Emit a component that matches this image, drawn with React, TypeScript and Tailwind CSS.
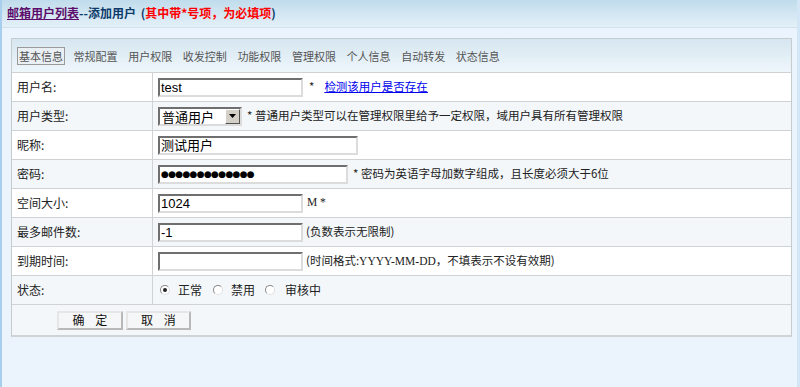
import React from 'react';

const cjk = "font-['Noto_Sans_CJK_SC',sans-serif]";

const tabs = ['基本信息', '常规配置', '用户权限', '收发控制', '功能权限', '管理权限', '个人信息', '自动转发', '状态信息'];

function TextBox({ value, width }: { value: string; width: string }) {
  return (
    <div
      className={`${width} h-[19px] border-2 border-t-[#6f6f6f] border-l-[#6f6f6f] border-b-[#dcdcdc] border-r-[#dcdcdc] bg-white pl-[1px] text-[13px] leading-[15px] text-black font-['Liberation_Sans','Noto_Sans_CJK_SC',sans-serif]`}
    >
      {value}
    </div>
  );
}

function Radio({ checked }: { checked?: boolean }) {
  return (
    <span className="flex h-[10px] w-[10px] items-center justify-center rounded-full border border-t-[#8a8a8a] border-l-[#8a8a8a] border-b-[#e0e0e0] border-r-[#e0e0e0] bg-white">
      {checked && <span className="h-[4px] w-[4px] rounded-full bg-[#222]" />}
    </span>
  );
}

function Row({ label, shade, children }: { label: string; shade?: boolean; children: React.ReactNode }) {
  return (
    <div className={`flex h-[29px] border-b border-[#d0d3d5] ${shade ? 'bg-[#f3f7fa]' : 'bg-white'}`}>
      <div className="flex w-[141px] items-center border-r border-[#d0d3d5] pl-[5px] text-[#222]">{label}</div>
      <div className="flex flex-1 items-center pl-[5px] text-[11.5px] text-[#222]">{children}</div>
    </div>
  );
}

export default function App() {
  return (
    <div className={`h-[387px] w-[800px] overflow-hidden border-l-2 border-l-[#a9cfee] border-r-[3px] border-r-[#d2e6f6] bg-[#ebf4fc] text-[12px] ${cjk}`}>
      {/* Header */}
      <div className="h-[28px] border-b border-[#cfe2ee] bg-gradient-to-b from-[#c0dcec] to-[#e4f0f8] pl-[5px] pt-[5px] font-bold leading-[16px]">
        <span className="text-[#5c0d6b] underline">邮箱用户列表</span>
        <span className="text-[#0c3b6b]">--添加用户 </span>
        <span className="ml-[2px] text-[#0c3b6b]">(</span>
        <span className="text-[#ff0000]">其中带*号项，为必填项</span>
        <span className="text-[#0c3b6b]">)</span>
      </div>

      {/* Panel */}
      <div className="ml-[9px] mt-[10px] w-[781px] border border-[#c6cbce] border-b-2 border-b-[#cfd3d6]">
        <div className="flex h-[34px] items-center gap-[6.6px] border-b border-[#d0d3d5] bg-gradient-to-b from-[#d6e6f0] to-[#eef6fb] pl-[5px] text-[11px] text-[#555]">
          {tabs.map((t, i) => (
            <span
              key={t}
              className={`h-[18px] px-[1px] leading-[16px] ${i === 0 ? 'border border-[#9a9a9a] bg-[#e9eff3]' : 'border border-transparent'}`}
            >
              {t}
            </span>
          ))}
        </div>

        <Row label="用户名:">
          <TextBox value="test" width="w-[145px]" />
          <span className="ml-[6px]">*</span>
          <a className="ml-[10px] text-[#0000ee] underline">检测该用户是否存在</a>
        </Row>
        <Row label="用户类型:" shade>
          <div className="flex h-[19px] w-[84px] border-2 border-t-[#6f6f6f] border-l-[#6f6f6f] border-b-[#dcdcdc] border-r-[#dcdcdc] bg-white">
            <span className="flex-1 pl-[2px] text-[13px] leading-[15px] text-black">普通用户</span>
            <span className="flex w-[15px] items-center justify-center border border-t-white border-l-white border-b-[#555] border-r-[#555] bg-[#d4d0c8]">
              <svg width="7" height="4" viewBox="0 0 7 4">
                <path d="M0 0h7L3.5 4z" fill="#000" />
              </svg>
            </span>
          </div>
          <span className="ml-[5px]">* 普通用户类型可以在管理权限里给予一定权限，域用户具有所有管理权限</span>
        </Row>
        <Row label="昵称:">
          <TextBox value="测试用户" width="w-[200px]" />
        </Row>
        <Row label="密码:" shade>
          <div className="flex h-[19px] w-[190px] items-center border-2 border-t-[#6f6f6f] border-l-[#6f6f6f] border-b-[#dcdcdc] border-r-[#dcdcdc] bg-white pl-[1px] text-[9px] leading-none tracking-[-0.7px] text-black font-['DejaVu_Sans',sans-serif]">
            ●●●●●●●●●●●●●
          </div>
          <span className="ml-[5px]">* 密码为英语字母加数字组成，且长度必须大于6位</span>
        </Row>
        <Row label="空间大小:">
          <TextBox value="1024" width="w-[145px]" />
          <span className="ml-[4px] font-['Liberation_Serif','Noto_Sans_CJK_SC',serif]">M *</span>
        </Row>
        <Row label="最多邮件数:" shade>
          <TextBox value="-1" width="w-[145px]" />
          <span className="ml-[3px]">(负数表示无限制)</span>
        </Row>
        <Row label="到期时间:">
          <TextBox value="" width="w-[145px]" />
          <span className="ml-[3px]">
            (时间格式:<span className="font-['Liberation_Serif',serif]">YYYY-MM-DD</span>，不填表示不设有效期)
          </span>
        </Row>
        <Row label="状态:" shade>
          <div className="ml-[2px] flex items-center text-[12px]">
            <Radio checked />
            <span className="ml-[8px]">正常</span>
            <span className="ml-[11px]"><Radio /></span>
            <span className="ml-[8px]">禁用</span>
            <span className="ml-[10px]"><Radio /></span>
            <span className="ml-[10px]">审核中</span>
          </div>
        </Row>

        <div className="flex h-[30px] items-center gap-[3px] bg-[#f3f7fa] pl-[45px]">
          <button className="h-[19px] w-[66px] border-2 border-t-[#e6e6e6] border-l-[#e6e6e6] border-b-[#b8b8b8] border-r-[#b8b8b8] bg-[#f5f6f7] text-[12px] leading-[14px] text-[#111]">
            确&nbsp;&nbsp;&nbsp;&nbsp;定
          </button>
          <button className="h-[19px] w-[65px] border-2 border-t-[#e6e6e6] border-l-[#e6e6e6] border-b-[#b8b8b8] border-r-[#b8b8b8] bg-[#f5f6f7] text-[12px] leading-[14px] text-[#111]">
            取&nbsp;&nbsp;&nbsp;&nbsp;消
          </button>
        </div>
      </div>
    </div>
  );
}
